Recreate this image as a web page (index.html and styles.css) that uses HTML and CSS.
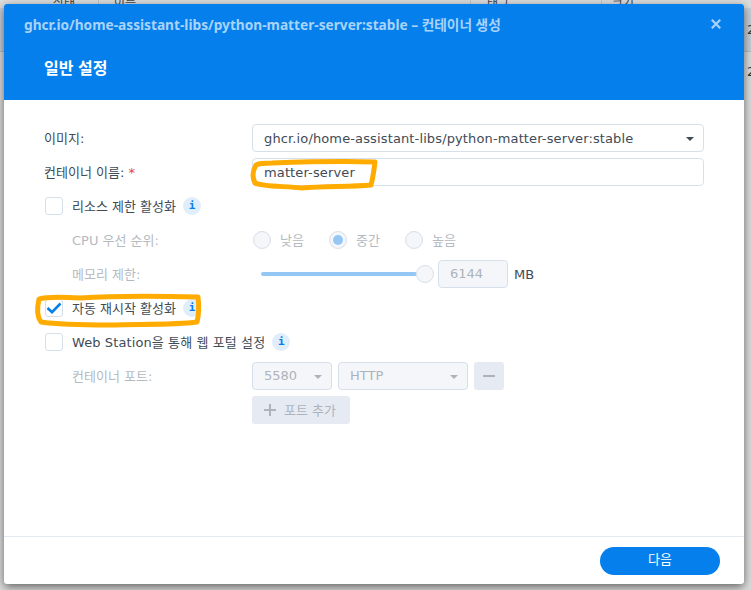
FILE: index.html
```html
<!DOCTYPE html>
<html lang="ko">
<head>
<meta charset="utf-8">
<title>컨테이너 생성</title>
<link rel="stylesheet" href="styles.css">
</head>
<body>
<div class="backdrop">
  <div class="bg-head"><span class="c1">상태</span><span class="c2">이름</span><span class="c3">태그</span><span class="c4">크기</span></div>
  <div class="bg-row first">2</div>
  <div class="bg-row">2</div>
</div>
<div class="dialog">
  <header class="head">
    <div class="head-top">
      <span class="head-title">ghcr.io/home-assistant-libs/python-matter-server:stable – 컨테이너 생성</span>
      <svg class="close" width="10" height="10" viewBox="0 0 10 10"><path d="M0.8 0.8 9.2 9.2M9.2 0.8 0.8 9.2"/></svg>
    </div>
    <h1 class="head-sub">일반 설정</h1>
  </header>
  <main class="body">
    <div class="row">
      <label class="lab">이미지:</label>
      <div class="field grow">ghcr.io/home-assistant-libs/python-matter-server:stable<span class="caret"></span></div>
    </div>
    <div class="row">
      <label class="lab">컨테이너 이름: <span class="req">*</span></label>
      <div class="field grow">matter-server</div>
    </div>
    <div class="row">
      <span class="check"></span><span class="chk-text">리소스 제한 활성화</span><span class="info">i</span>
    </div>
    <div class="row">
      <label class="lab sub off">CPU 우선 순위:</label>
      <div class="radios">
        <span class="radio"></span><span class="off r-text">낮음</span>
        <span class="radio on"></span><span class="off r-text">중간</span>
        <span class="radio"></span><span class="off r-text">높음</span>
      </div>
    </div>
    <div class="row">
      <label class="lab sub off">메모리 제한:</label>
      <div class="slider"><span class="track"></span><span class="thumb"></span></div>
      <div class="field dis num">6144</div>
      <span class="unit">MB</span>
    </div>
    <div class="row">
      <span class="check"><svg width="16" height="12" viewBox="0 0 16 12"><path d="M1.5 6 6 10.2 14.5 1.5"/></svg></span><span class="chk-text">자동 재시작 활성화</span><span class="info">i</span>
    </div>
    <div class="row">
      <span class="check"></span><span class="chk-text wide">Web Station을 통해 웹 포털 설정</span><span class="info">i</span>
    </div>
    <div class="row">
      <label class="lab sub off">컨테이너 포트:</label>
      <div class="field dis port">5580<span class="caret"></span></div>
      <div class="field dis proto">HTTP<span class="caret"></span></div>
      <span class="btn minus"><i></i></span>
    </div>
    <div class="row">
      <span class="lab"></span>
      <span class="btn add"><svg width="12" height="12" viewBox="0 0 12 12"><path d="M6 0V12M0 6H12"/></svg><span class="add-text">포트 추가</span></span>
    </div>
  </main>
  <footer class="foot"><span class="next">다음</span></footer>
</div>
<svg class="marks" width="751" height="590" viewBox="0 0 751 590">
  <path d="M256 165C253 170 252 177 255 183 263 187 285 186 302 188 325 186 350 187 371 185 373 178 374 170 375 162 345 161 300 162 272 163 264 163 259 163 256 165Z"/>
  <path d="M39 299C37 308 37 317 41 322 60 325 90 325 110 325 140 324 175 325 197 322 199 314 199 305 198 297 160 296 110 296 80 298 65 297 48 296 39 299Z"/>
</svg>
</body>
</html>
```

FILE: styles.css
```css
* { box-sizing: border-box; }
html, body { margin: 0; height: 100%; }
body {
  position: relative;
  width: 751px;
  height: 590px;
  overflow: hidden;
  background: #dcdcdc;
  font-family: "DejaVu Sans", "Noto Sans CJK KR", sans-serif;
  font-size: 13px;
  color: #414b55;
}
.backdrop { height: 590px; background: #dcdcdc; color: #444; font-size: 12px; }
.bg-head { height: 8px; display: flex; overflow: hidden; line-height: 4px; font-family: "Noto Sans CJK KR", sans-serif; }
.bg-head span { height: 8px; }
.bg-head .c1 { width: 99px; padding-left: 53px; border-right: 1px solid #c4c4c4; }
.bg-head .c2 { width: 372px; padding-left: 15px; border-right: 1px solid #c4c4c4; }
.bg-head .c3 { width: 131px; padding-left: 16px; border-right: 1px solid #c4c4c4; }
.bg-head .c4 { padding-left: 10px; }
.bg-row { height: 40px; line-height: 40px; padding-left: 747px; font-size: 13px; color: #333; }
.bg-row.first { height: 44px; line-height: 44px; background: #c6ced6; border-bottom: 1px solid #b8bcc0; }

.dialog {
  position: absolute;
  left: 4px;
  top: 4px;
  width: 740px;
  height: 580px;
  display: flex;
  flex-direction: column;
  background: #fff;
  border-radius: 3px;
  box-shadow: 0 3px 10px rgba(0, 0, 0, .55);
}
.head { height: 96px; background: #057feb; border-radius: 3px 3px 0 0; padding: 10px 23px 0 20px; }
.head-top { display: flex; justify-content: space-between; align-items: center; height: 20px; }
.head-title { font-family: "Noto Sans", "Noto Sans CJK KR", sans-serif; font-size: 13.7px; font-weight: 700; color: #a8d3fa; white-space: nowrap; }
.close { fill: none; stroke: #a8d3fa; stroke-width: 2.2; }
.head-sub { margin: 23px 0 0 20px; font-family: "Noto Sans CJK KR", sans-serif; font-size: 16px; line-height: 20px; font-weight: 700; color: #fff; }

.body { flex: 1; padding: 24px 40px 0; display: flex; flex-direction: column; gap: 6px; }
.row { display: flex; align-items: center; height: 28px; white-space: nowrap; }
.lab { width: 208px; flex: none; padding-bottom: 2px; }
.lab.sub { padding-left: 28px; }
.off { color: #b5bac0; }
.req { color: #e64444; }
.field {
  height: 28px;
  padding: 0 11px;
  line-height: 26px;
  border: 1px solid #d6e0ea;
  border-radius: 4px;
  background: #fff;
  position: relative;
}
.grow { flex: 1; line-height: 27px; letter-spacing: .13px; }
.field.dis { background: #f4f6fa; color: #adb3b9; }
.caret {
  position: absolute;
  right: 9px;
  top: 12px;
  border-left: 4px solid transparent;
  border-right: 4px solid transparent;
  border-top: 4px solid #414b55;
}
.dis .caret { border-top-color: #adb3b9; }

.check {
  width: 18px;
  height: 18px;
  margin: 0 9px 0 1px;
  flex: none;
  border: 1px solid #d6e0ea;
  border-radius: 3px;
  display: flex;
  align-items: center;
  justify-content: center;
  background: #fff;
}
.check svg { flex: none; fill: none; stroke: #057feb; stroke-width: 2.6; }
.chk-text { padding-bottom: 2px; }
.chk-text.wide { letter-spacing: .1px; }
.info {
  width: 18px;
  height: 18px;
  margin-left: 7px;
  border-radius: 50%;
  background: #e0eefc;
  color: #057feb;
  font: 700 11px/18px "DejaVu Sans Mono", monospace;
  text-align: center;
}
.radios { display: flex; align-items: center; }
.radio {
  width: 18px;
  height: 18px;
  border-radius: 50%;
  border: 1px solid #d6e0ea;
  background: #f4f6fa;
  display: flex;
  align-items: center;
  justify-content: center;
  margin-left: 1px;
}
.radio.on::after { content: ""; width: 10px; height: 10px; border-radius: 50%; background: #95c7f5; }
.r-text { margin-left: 9px; width: 48px; padding-bottom: 2px; }
.slider { width: 186px; flex: none; display: flex; align-items: center; padding-left: 9px; }
.track { width: 156px; height: 4px; background: #95c7f5; border-radius: 2px; }
.thumb { width: 18px; height: 18px; margin-left: -1px; flex: none; border-radius: 50%; border: 1px solid #d6e0ea; background: #f4f6fa; }
.num { width: 70px; }
.unit { margin-left: 6px; }
.port { width: 80px; }
.proto { width: 130px; margin-left: 6px; }
.btn { background: #e6ebf3; border-radius: 3px; color: #adb3b9; display: flex; align-items: center; height: 28px; }
.minus { width: 30px; margin-left: 6px; justify-content: center; }
.minus i { width: 12px; height: 2px; background: #adb3b9; }
.add { width: 98px; padding-left: 12px; gap: 8px; }
.add svg { fill: none; stroke: #adb3b9; stroke-width: 2; }
.add-text { padding-bottom: 2px; }

.foot { height: 48px; border-top: 1px solid #e3eaf2; display: flex; justify-content: flex-end; align-items: center; padding: 0 24px 0 0; }
.next {
  width: 120px;
  height: 28px;
  border-radius: 14px;
  background: #057feb;
  color: #fff;
  line-height: 26px;
  text-align: center;
}
.marks { position: absolute; left: 0; top: 0; pointer-events: none; }
.marks path { fill: none; stroke: #ffab00; stroke-width: 5; stroke-linejoin: round; stroke-linecap: round; }
```
